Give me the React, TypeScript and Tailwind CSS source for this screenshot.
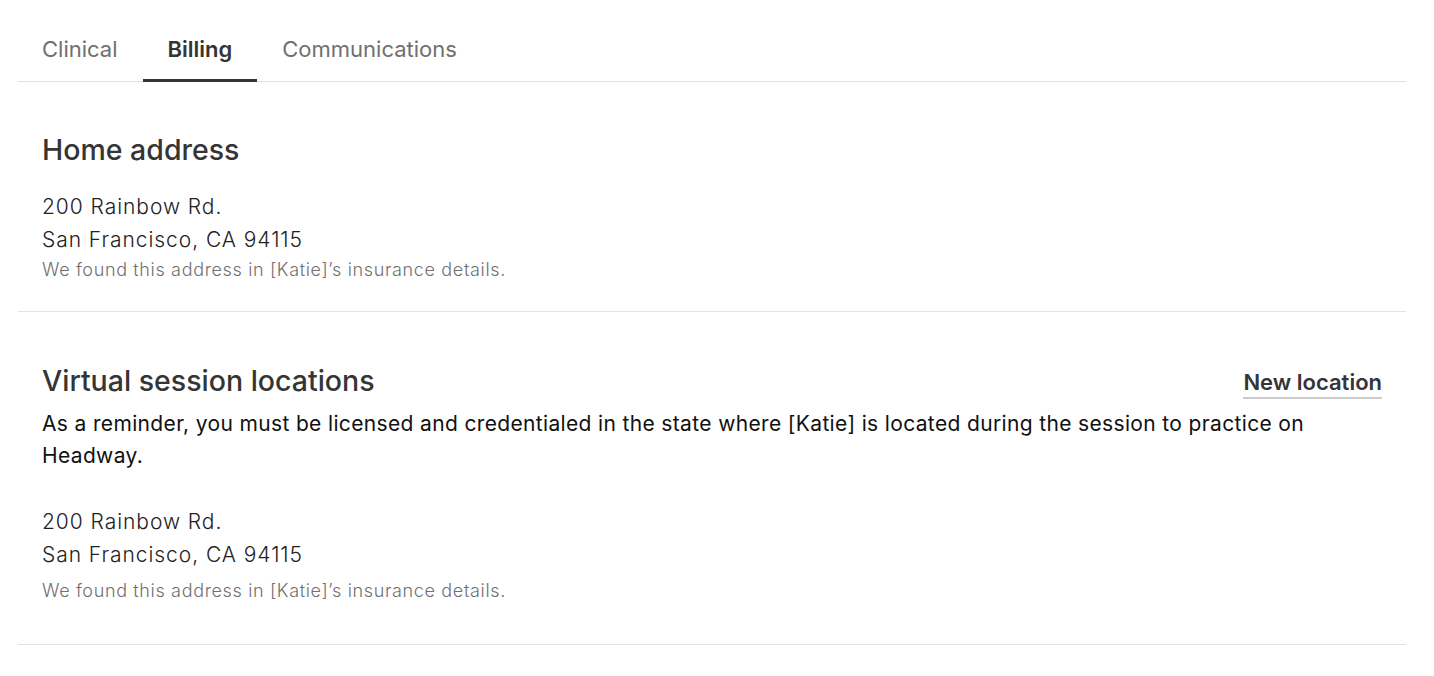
import { useState } from 'react'

const tabs = ['Clinical', 'Billing', 'Communications']

function AddressBlock({ noteGap }: { noteGap: string }) {
  return (
    <div>
      <div className="text-[21px] font-light leading-[33px] tracking-[0.95px] text-[#222222]">200 Rainbow Rd.</div>
      <div className="text-[21px] font-light leading-[33px] tracking-[0.95px] text-[#222222]">San Francisco, CA 94115</div>
      <div className={`${noteGap} text-[18px] font-light leading-[24px] tracking-[0.65px] text-[#707070]`}>
        We found this address in [Katie]’s insurance details.
      </div>
    </div>
  )
}

export default function App() {
  const [active, setActive] = useState('Billing')

  return (
    <div className="min-h-screen bg-white font-['Inter',sans-serif] antialiased">
      <div className="ml-[18px] mr-[28px]">
        {/* Tabs */}
        <div className="flex border-b border-[#e2e2e2] pt-[36px]">
          {tabs.map(tab => {
            const isActive = tab === active
            return (
              <button
                key={tab}
                onClick={() => setActive(tab)}
                className={`-mb-px border-b-[3px] px-[25px] pb-[17px] text-[22px] leading-[26px] first:pl-[24px] ${
                  isActive
                    ? 'border-[#353535] font-semibold text-[#353535]'
                    : 'border-transparent text-[#707070]'
                }`}
              >
                {tab}
              </button>
            )
          })}
        </div>

        {/* Home address */}
        <section className="border-b border-[#e2e2e2] px-[24px] pt-[50px] pb-[29px]">
          <h2 className="mb-[22px] text-[28.5px] font-medium leading-[36px] text-[#353535]">Home address</h2>
          <AddressBlock noteGap="mt-[2px]" />
        </section>

        {/* Virtual session locations */}
        <section className="border-b border-[#e2e2e2] px-[24px] pt-[51px] pb-[41px]">
          <div className="flex items-start justify-between">
            <h2 className="text-[28.5px] font-medium leading-[36px] text-[#353535]">Virtual session locations</h2>
            <button className="mt-[6px] border-b-2 border-[#cccccc] pb-[2px] text-[22px] font-semibold leading-[26px] text-[#353535]">
              New location
            </button>
          </div>
          <p className="mb-[33px] mt-[9px] pr-[20px] text-[21px] leading-[32px] tracking-[0.35px] text-[#111111]">
            As a reminder, you must be licensed and credentialed in the state where [Katie] is located during the
            session to practice on Headway.
          </p>
          <AddressBlock noteGap="mt-[8px]" />
        </section>
      </div>
    </div>
  )
}
